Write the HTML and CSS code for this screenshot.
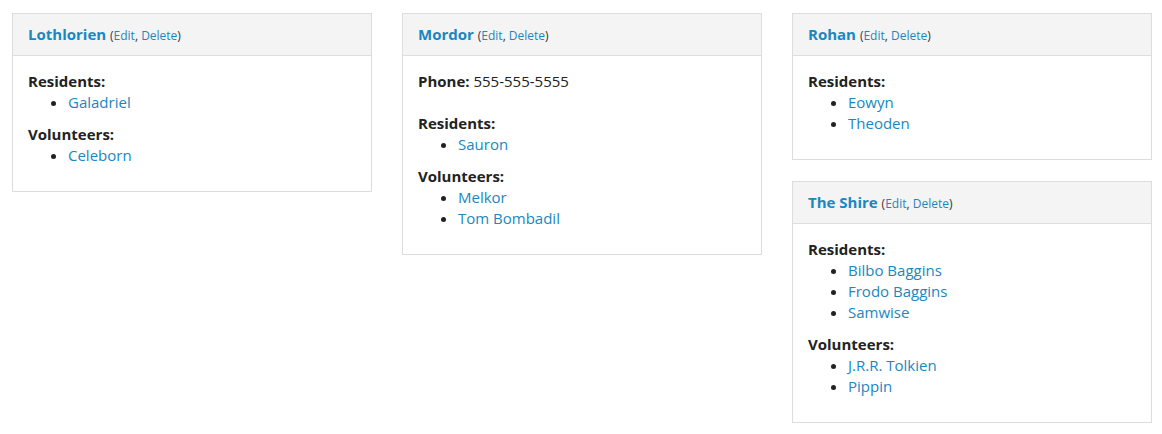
FILE: index.html
```html
<!DOCTYPE html>
<html>
<head>
<meta charset="utf-8">
<link rel="stylesheet" href="styles.css">
</head>
<body>
<div class="grid">
  <div class="col">
    <div class="card">
      <div class="card-head"><a class="title" href="#">Lothlorien</a> <span class="actions">(<a href="#">Edit</a>, <a href="#">Delete</a>)</span></div>
      <div class="card-body">
        <div class="label">Residents:</div>
        <ul><li><a href="#">Galadriel</a></li></ul>
        <div class="label">Volunteers:</div>
        <ul><li><a href="#">Celeborn</a></li></ul>
      </div>
    </div>
  </div>
  <div class="col">
    <div class="card">
      <div class="card-head"><a class="title" href="#">Mordor</a> <span class="actions">(<a href="#">Edit</a>, <a href="#">Delete</a>)</span></div>
      <div class="card-body">
        <p class="phone"><strong>Phone:</strong> 555-555-5555</p>
        <div class="label">Residents:</div>
        <ul><li><a href="#">Sauron</a></li></ul>
        <div class="label">Volunteers:</div>
        <ul><li><a href="#">Melkor</a></li><li><a href="#">Tom Bombadil</a></li></ul>
      </div>
    </div>
  </div>
  <div class="col">
    <div class="card">
      <div class="card-head"><a class="title" href="#">Rohan</a> <span class="actions">(<a href="#">Edit</a>, <a href="#">Delete</a>)</span></div>
      <div class="card-body">
        <div class="label">Residents:</div>
        <ul><li><a href="#">Eowyn</a></li><li><a href="#">Theoden</a></li></ul>
      </div>
    </div>
    <div class="card">
      <div class="card-head"><a class="title" href="#">The Shire</a> <span class="actions">(<a href="#">Edit</a>, <a href="#">Delete</a>)</span></div>
      <div class="card-body">
        <div class="label">Residents:</div>
        <ul><li><a href="#">Bilbo Baggins</a></li><li><a href="#">Frodo Baggins</a></li><li><a href="#">Samwise</a></li></ul>
        <div class="label">Volunteers:</div>
        <ul><li><a href="#">J.R.R. Tolkien</a></li><li><a href="#">Pippin</a></li></ul>
      </div>
    </div>
  </div>
</div>
</body>
</html>
```

FILE: styles.css
```css
html, body {
  margin: 0;
  padding: 0;
  background: #fff;
}
body {
  font-family: "Open Sans", "DejaVu Sans", sans-serif;
  font-size: 15px;
  line-height: 21px;
  color: #222;
}
a {
  color: #1a87c0;
  text-decoration: none;
}
.grid {
  display: grid;
  grid-template-columns: 360px 360px 360px;
  column-gap: 30px;
  padding: 13px 10px 0 12px;
  align-items: start;
}
.col {
  display: flex;
  flex-direction: column;
  gap: 21px;
}
.card {
  border: 1px solid #ddd;
  background: #fff;
}
.card-head {
  background: #f4f4f4;
  border-bottom: 1px solid #ddd;
  height: 42px;
  box-sizing: border-box;
  padding: 10px 15px 0;
  line-height: 21px;
}
.title {
  font-weight: 700;
  font-size: 15px;
}
.actions {
  font-size: 12px;
  color: #333;
}
.card-body {
  padding: 15px 15px 15px;
}
.label {
  font-weight: 700;
}
.phone {
  margin: 0 0 21px;
}
ul {
  margin: 0 0 11px;
  padding-left: 40px;
}
ul:last-child {
  margin-bottom: 10px;
}
li {
  line-height: 21px;
}
```
